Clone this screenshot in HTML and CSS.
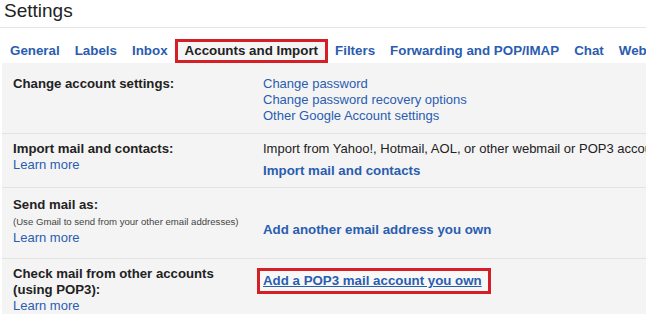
FILE: index.html
```
<!DOCTYPE html>
<html lang="en">
<head>
    <meta charset="UTF-8">
    <meta name="viewport" content="width=device-width, initial-scale=1.0">
    <title>Settings</title>
    <link rel="stylesheet" href="styles.css">
</head>
<body>
    <div class="page">
        <h1 class="title">Settings</h1>

        <div class="tabs">
            <a class="tab" href="#">General</a>
            <a class="tab" href="#">Labels</a>
            <a class="tab" href="#">Inbox</a>
            <a class="tab active" href="#">Accounts and Import</a>
            <a class="tab" href="#">Filters</a>
            <a class="tab" href="#">Forwarding and POP/IMAP</a>
            <a class="tab" href="#">Chat</a>
            <a class="tab" href="#">Web Clips</a>
        </div>

        <div class="panel">
            <div class="row row-first">
                <div class="label"><b>Change account settings:</b></div>
                <div class="value">
                    <a href="#">Change password</a><br>
                    <a href="#">Change password recovery options</a><br>
                    <a href="#">Other Google Account settings</a>
                </div>
            </div>

            <div class="row">
                <div class="label">
                    <b>Import mail and contacts:</b><br>
                    <a href="#">Learn more</a>
                </div>
                <div class="value">
                    Import from Yahoo!, Hotmail, AOL, or other webmail or POP3 accounts.
                    <div class="action"><a class="strong" href="#">Import mail and contacts</a></div>
                </div>
            </div>

            <div class="row row-send">
                <div class="label">
                    <b>Send mail as:</b><br>
                    <span class="note">(Use Gmail to send from your other email addresses)</span><br>
                    <a href="#">Learn more</a>
                </div>
                <div class="value value-low">
                    <a class="strong" href="#">Add another email address you own</a>
                </div>
            </div>

            <div class="row row-last">
                <div class="label">
                    <b>Check mail from other accounts<br>(using POP3):</b><br>
                    <a href="#">Learn more</a>
                </div>
                <div class="value">
                    <a class="strong boxed" href="#">Add a POP3 mail account you own</a>
                </div>
            </div>
        </div>
    </div>
</body>
</html>
```

FILE: styles.css
```
body {
    margin: 0;
    background: white;
    font-family: Arial, "Liberation Sans", sans-serif;
    font-size: 13px;
    color: #222;
}

a {
    color: #2a5db0;
    text-decoration: none;
}

.page {
    width: 646px;
    overflow: hidden;
}

.title {
    margin: 0;
    padding: 0 0 5px 4px;
    height: 22px;
    line-height: 22px;
    font-size: 19px;
    font-weight: normal;
    color: #222;
    border-bottom: 1px solid #e5e5e5;
}

.tabs {
    display: flex;
    padding: 11px 0 0 2.5px;
    white-space: nowrap;
}

.tab {
    padding: 0 4.5px;
    border: 3px solid transparent;
    line-height: 18px;
    font-size: 13.35px;
    font-weight: bold;
}

.tab.active {
    padding: 0 6.5px;
    border-color: #d51f26;
    background: #f5f5f5;
    color: #222;
}

.panel {
    margin-left: 2px;
    background: #f4f4f4;
    line-height: 16px;
    white-space: nowrap;
    overflow: hidden;
}

.row {
    display: grid;
    grid-template-columns: 250px 1fr;
    padding: 7px 0 8px 11px;
    border-bottom: 1px solid #e3e3e3;
}

.row-first {
    padding-top: 13px;
    padding-bottom: 9px;
}

.row-send {
    padding-top: 9px;
    padding-bottom: 12px;
}

.row-last {
    padding-bottom: 0;
    border-bottom: none;
}

.label b {
    font-size: 13.2px;
}

.note {
    font-size: 9.6px;
    color: #444;
}

.action {
    margin-top: 6px;
}

.value-low {
    padding-top: 25px;
}

.strong {
    font-weight: bold;
    font-size: 13.3px;
}

.boxed {
    display: inline-block;
    margin: 2px 0 0 -6px;
    padding: 2px 6px 2px 3px;
    border: 3px solid #d51f26;
    background: #f8f8f8;
    text-decoration: underline;
}
```
